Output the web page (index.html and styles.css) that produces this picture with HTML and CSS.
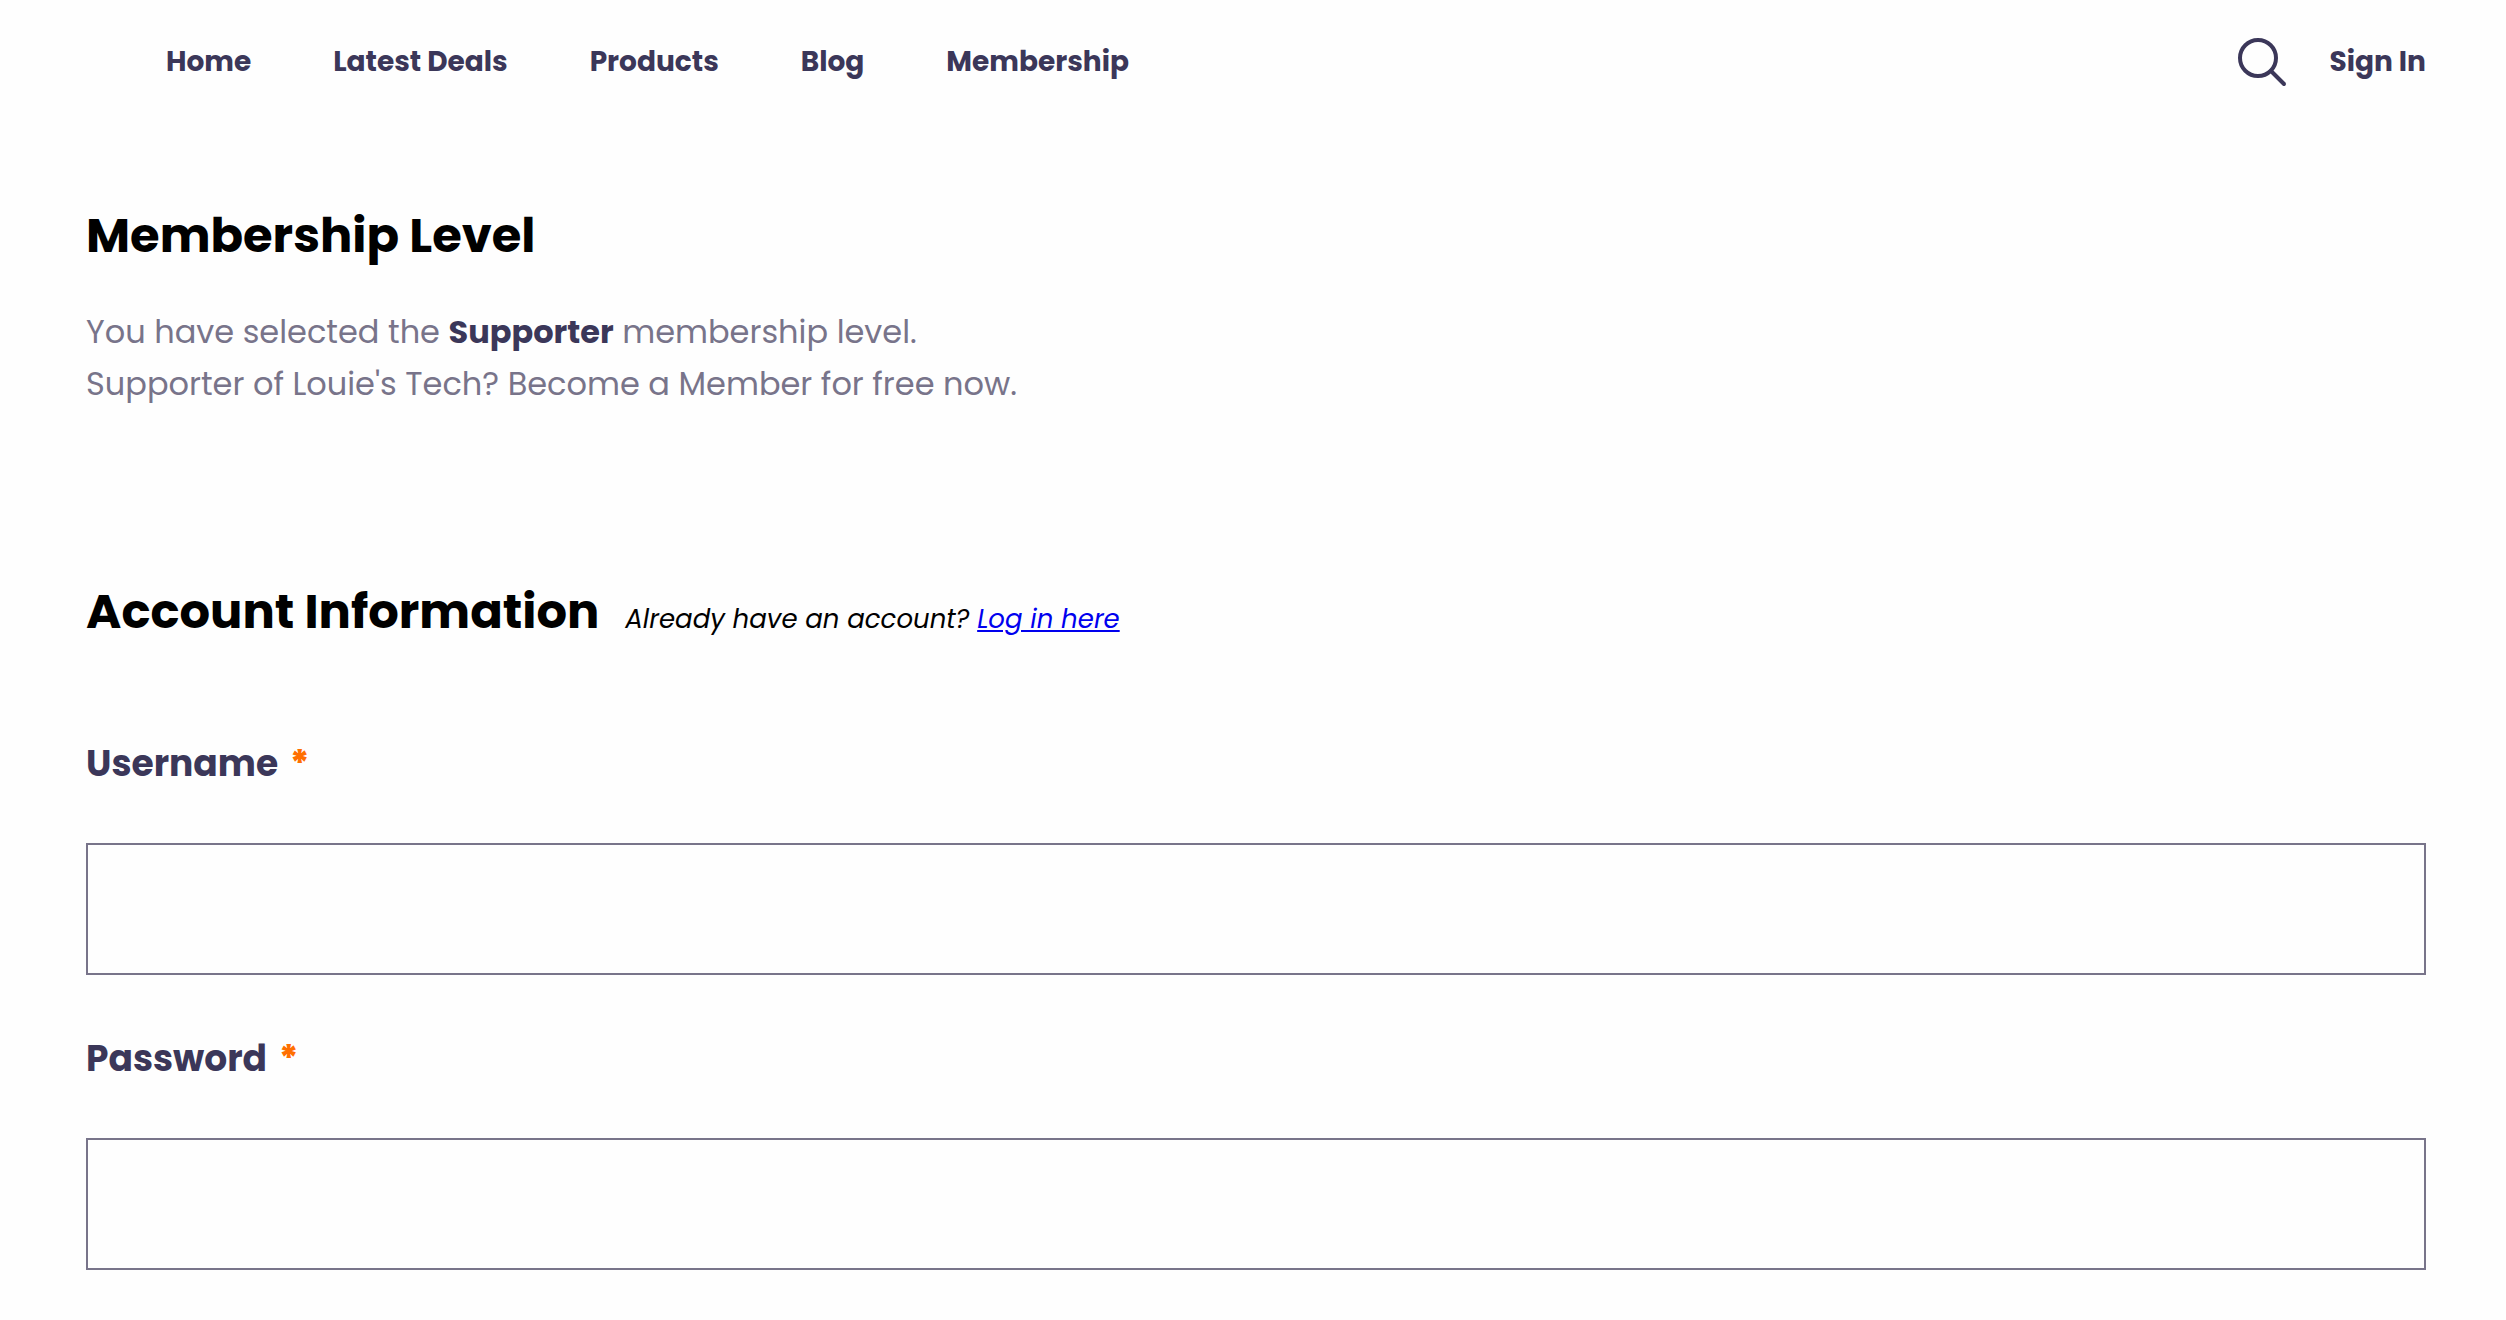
FILE: index.html
```html
<!DOCTYPE html>
<html lang="en">
<head>
    <meta charset="UTF-8">
    <meta name="viewport" content="width=device-width, initial-scale=1.0">
    <title>Membership Checkout</title>
    <link rel="stylesheet" href="styles.css">
</head>
<body>

    <header class="header">
        <nav class="nav">
            <a href="#">Home</a>
            <a href="#">Latest Deals</a>
            <a href="#">Products</a>
            <a href="#">Blog</a>
            <a href="#">Membership</a>
        </nav>
        <div class="actions">
            <button class="search" type="button" aria-label="Search">
                <svg viewBox="0 0 50 50" width="50" height="50" fill="none" stroke="currentColor" stroke-width="4" stroke-linecap="round">
                    <circle cx="21" cy="21" r="18"/>
                    <path d="M34 34 L47 47"/>
                </svg>
            </button>
            <a href="#">Sign In</a>
        </div>
    </header>

    <main class="content">
        <section class="level">
            <h2>Membership Level</h2>
            <p>You have selected the <strong>Supporter</strong> membership level.</p>
            <p>Supporter of Louie's Tech? Become a Member for free now.</p>
        </section>

        <form class="account">
            <div class="account-title">
                <h2>Account Information</h2>
                <span class="login">Already have an account? <a href="#">Log in here</a></span>
            </div>
            <div class="field">
                <label for="username">Username <span class="required">*</span></label>
                <input type="text" id="username" name="username">
            </div>
            <div class="field">
                <label for="password">Password <span class="required">*</span></label>
                <input type="password" id="password" name="password">
            </div>
        </form>
    </main>

</body>
</html>
```
FILE: styles.css
```css
* {
    box-sizing: border-box;
}
body {
    font-family: Poppins, Inter, sans-serif;
    background: #fefefe;
    color: #000;
    margin: 0;
}
h2, p {
    margin: 0;
}
.header {
    display: flex;
    justify-content: space-between;
    align-items: center;
    padding: 36px 80px 36px 166px;
    font-size: 28px;
    font-weight: 700;
    line-height: 52px;
}
.header a {
    color: #3b3759;
    text-decoration: none;
}
.nav {
    display: flex;
    gap: 82px;
}
.actions {
    display: flex;
    align-items: center;
    gap: 43px;
}
.search {
    display: flex;
    padding: 0;
    border: 0;
    background: none;
    color: #3b3759;
    cursor: pointer;
}
.content {
    padding: 74px 80px 48px 86px;
}
h2 {
    font-size: 48px;
    font-weight: 700;
    line-height: 76px;
}
.level p {
    font-size: 32px;
    line-height: 52px;
    color: #78748a;
}
.level h2 {
    margin-bottom: 32px;
}
.level strong {
    color: #3b3759;
}
.account {
    margin-top: 164px;
}
.account-title {
    display: flex;
    align-items: baseline;
    gap: 26px;
    margin-bottom: 85px;
}
.login {
    font-size: 26px;
    font-style: italic;
}
.login a {
    color: #0000ee;
}
.field {
    display: flex;
    flex-direction: column;
    gap: 51px;
    margin-bottom: 55px;
}
.field label {
    font-size: 36px;
    font-weight: 700;
    line-height: 57px;
    color: #3b3759;
}
.required {
    margin-left: 4px;
    font-weight: 800;
    color: #ff6f00;
}
.field input {
    width: 100%;
    height: 132px;
    padding: 0 36px;
    border: 2px solid #78748a;
    border-radius: 0;
    background: #fefefe;
    font-family: inherit;
    font-size: 32px;
    color: #3b3759;
}
```
